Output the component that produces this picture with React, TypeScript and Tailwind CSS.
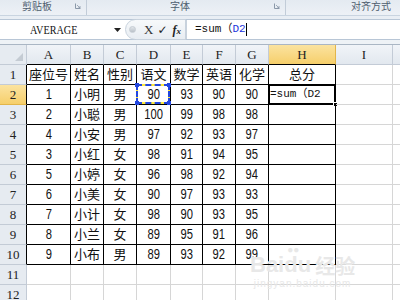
import React from 'react'

const cols = ['A', 'B', 'C', 'D', 'E', 'F', 'G', 'H', 'I', 'J']

const data: string[][] = [
  ['座位号', '姓名', '性别', '语文', '数学', '英语', '化学', '总分'],
  ['1', '小明', '男', '90', '93', '90', '90', '=sum（D2'],
  ['2', '小聪', '男', '100', '99', '98', '98', ''],
  ['4', '小安', '男', '97', '92', '93', '97', ''],
  ['3', '小红', '女', '98', '91', '94', '95', ''],
  ['5', '小婷', '女', '96', '98', '92', '94', ''],
  ['6', '小美', '女', '90', '97', '93', '93', ''],
  ['7', '小计', '女', '98', '90', '93', '95', ''],
  ['8', '小兰', '女', '89', '95', '91', '96', ''],
  ['9', '小布', '男', '89', '93', '92', '99', ''],
]

function Launcher() {
  return (
    <svg width="6" height="6" viewBox="0 0 6 6" className="mt-[3px]">
      <path d="M0.5 0.5 L0.5 5.5 L5.5 5.5" stroke="#8a98a8" strokeWidth="1" fill="none" />
      <path d="M2 2 L5 5 M5 3 L5 5 L3 5" stroke="#8a98a8" strokeWidth="0.8" fill="none" />
    </svg>
  )
}

function Ribbon() {
  return (
    <div className="flex h-[16px] bg-gradient-to-b from-[#e4eaf1] to-[#edf1f6] border-b border-[#c9d4e0] text-[10px] leading-[12px] text-[#4e5d6e] font-['Noto_Sans_CJK_SC',sans-serif] overflow-hidden">
      <div className="w-[87px] flex justify-between pl-[22px] pr-[5px] border-r border-[#c2ccd8]">
        <span>剪贴板</span>
        <Launcher />
      </div>
      <div className="w-[199px] flex justify-between pl-[83px] pr-[5px] border-r border-[#c2ccd8]">
        <span>字体</span>
        <Launcher />
      </div>
      <div className="flex-1 flex justify-end pr-[9px]">
        <span>对齐方式</span>
      </div>
    </div>
  )
}

function FormulaBar() {
  return (
    <div className="flex h-[21px] bg-white border-y border-[#b8c6d6] items-stretch">
      <div className="w-[125px] flex items-center relative">
        <span className="ml-[30px] inline-block origin-left scale-x-[0.85] font-['Liberation_Serif',serif] text-[12px] text-[#111]">AVERAGE</span>
        <svg width="7" height="5" viewBox="0 0 7 5" className="absolute left-[114px] top-[8px]">
          <path d="M0 0 L7 0 L3.5 4 Z" fill="#222" />
        </svg>
      </div>
      <div className="w-[61px] flex items-center gap-[5px] bg-gradient-to-b from-[#f7f9fb] to-[#e8edf2] rounded-l-full border border-[#c8d2dd] -my-[1px] pl-[3px]">
        <span className="w-[7px] h-[7px] rounded-full bg-gradient-to-b from-[#e2e6ea] to-[#b9c0c8] border border-[#c5ccd3]" />
        <span className="font-['Liberation_Serif',serif] text-[13px] text-[#333] ml-[3px]">X</span>
        <span className="text-[12px] text-[#222] font-['DejaVu_Sans',sans-serif] -ml-[1px]">✓</span>
        <span className="font-['Liberation_Serif',serif] italic text-[12px] text-[#222] font-semibold">f<span className="text-[9px]">x</span></span>
      </div>
      <div className="flex-1 flex items-center pl-[8px] border-l border-[#c8d2dd] font-['Liberation_Mono','Noto_Sans_CJK_SC',monospace] text-[11px] text-[#111]">
        <span>=sum（</span>
        <span className="text-[#2233dd]">D2</span>
        <span className="w-px h-[13px] bg-black" />
      </div>
    </div>
  )
}

function Watermark() {
  return (
    <div className="absolute left-[250px] top-[254px] flex flex-col items-center text-[#e8e8e8] pointer-events-none">
      <div className="flex items-end font-['Liberation_Sans',sans-serif] text-[22px] font-bold leading-none">
        <span>Bai</span>
        <span className="relative">
          du
          <span className="absolute -top-[9px] left-[3px] text-[10px]">●●</span>
        </span>
        <span className="ml-[4px] font-['Noto_Sans_CJK_SC',sans-serif] text-[20px] font-bold">经验</span>
      </div>
      <div className="font-['Liberation_Sans',sans-serif] text-[10px] leading-none mt-[3px] tracking-[1px]">jingyan.baidu.com</div>
    </div>
  )
}

const headFont = "font-['Liberation_Serif',serif] text-[13px] text-[#222]"
const cellFont = "font-['Liberation_Sans','Noto_Sans_CJK_SC',sans-serif]"

function Sheet() {
  const rows = Array.from({ length: 12 }, (_, i) => i + 1)
  return (
    <div className="grid grid-cols-[27px_44px_33px_33px_34px_32px_33px_33px_67px_57px_60px] auto-rows-[20px] border-t border-[#aab6c4]">
      <div className="bg-[#e6ebf1] border-r border-b border-[#c3cbd6] flex items-end justify-end p-[3px]">
        <svg width="8" height="8" viewBox="0 0 8 8">
          <path d="M8 0 L8 8 L0 8 Z" fill="#c4cbd3" />
        </svg>
      </div>
      {cols.map((c, ci) => (
        <div
          key={c}
          className={
            `flex items-center justify-center border-r border-b ${headFont} ` +
            (c === 'H'
              ? 'bg-gradient-to-b from-[#fbe39f] to-[#f6cf6a] border-r-[#e2b54a] border-b-black'
              : ci < 8
                ? 'bg-gradient-to-b from-[#f1f4f8] to-[#e2e8ef] border-r-[#c3cbd6] border-b-black'
                : 'bg-gradient-to-b from-[#f1f4f8] to-[#e2e8ef] border-[#c3cbd6]')
          }
        >
          {c}
        </div>
      ))}
      {rows.map((r) => {
        const inTable = r <= 10
        const rowData = inTable ? data[r - 1] : []
        return (
          <React.Fragment key={r}>
            <div
              className={
                `flex items-center justify-center border-r border-b ${headFont} ` +
                (r === 2
                  ? 'bg-gradient-to-b from-[#fbe39f] to-[#f6cf6a] border-b-[#e2b54a] border-r-black'
                  : inTable
                    ? 'bg-[#e6ebf1] border-b-[#c3cbd6] border-r-black'
                    : 'bg-[#e6ebf1] border-[#c3cbd6]')
              }
            >
              {r}
            </div>
            {cols.map((c, ci) => {
              const table = inTable && ci < 8
              const text = table ? rowData[ci] : ''
              const isFormula = r === 2 && c === 'H'
              const isNum = /^\d+$/.test(text)
              return (
                <div
                  key={c}
                  className={
                    `relative flex items-center border-r border-b text-[13px] text-[#111] ${cellFont} ` +
                    (table ? 'border-black ' : 'border-[#d6d6d6] ') +
                    (isFormula ? 'justify-start pl-[1px]' : 'justify-center')
                  }
                >
                  {isFormula ? (
                    <>
                      <span className="font-['Liberation_Mono','Noto_Sans_CJK_SC',monospace] text-[11px]">{text}</span>
                      <div className="absolute -left-[1px] -top-[1px] -right-[1px] -bottom-[1px] border-2 border-black" />
                      <div className="absolute -right-[3px] -bottom-[3px] w-[5px] h-[5px] bg-black border border-white" />
                    </>
                  ) : isNum ? (
                    <span className="inline-block scale-x-[0.8] text-[14px]">{text}</span>
                  ) : (
                    <span>{text}</span>
                  )}
                  {r === 2 && c === 'D' && (
                    <>
                      <div className="absolute -left-[1px] -top-[1px] right-0 bottom-0 border-2 border-[#ffea3a]" />
                      <div className="absolute -left-[1px] -top-[1px] right-0 bottom-0 border-2 border-dashed border-[#2247e0]" />
                      <div className="absolute -left-[2px] -top-[2px] w-[4px] h-[4px] bg-[#2247e0]" />
                      <div className="absolute -right-[1px] -top-[2px] w-[4px] h-[4px] bg-[#2247e0]" />
                      <div className="absolute -left-[2px] -bottom-[1px] w-[4px] h-[4px] bg-[#2247e0]" />
                      <div className="absolute -right-[1px] -bottom-[1px] w-[4px] h-[4px] bg-[#2247e0]" />
                    </>
                  )}
                </div>
              )
            })}
          </React.Fragment>
        )
      })}
    </div>
  )
}

export default function App() {
  return (
    <div className="w-[400px] h-[300px] overflow-hidden bg-white relative">
      <Ribbon />
      <div className="h-[3px] bg-[#e9eef4]" />
      <FormulaBar />
      <div className="h-[4px] bg-[#eef2f6]" />
      <Sheet />
      <Watermark />
    </div>
  )
}
